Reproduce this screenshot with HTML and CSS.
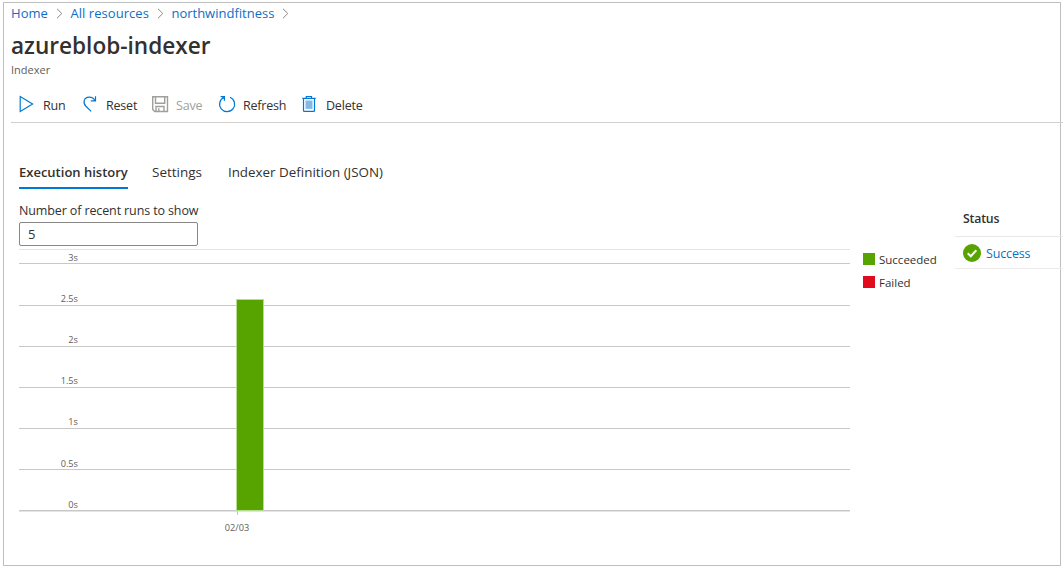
FILE: index.html
```html
<!DOCTYPE html>
<html lang="en">
<head>
<meta charset="utf-8">
<title>azureblob-indexer</title>
<link rel="stylesheet" href="styles.css">
</head>
<body>
<main class="frame">
  <nav class="crumbs">
    <a class="crumb home">Home</a>
    <svg class="chev" viewBox="0 0 7 11"><path d="M1 .8 5.8 5.5 1 10.2"/></svg>
    <a class="crumb all">All resources</a>
    <svg class="chev" viewBox="0 0 7 11"><path d="M1 .8 5.8 5.5 1 10.2"/></svg>
    <a class="crumb service">northwindfitness</a>
    <svg class="chev" viewBox="0 0 7 11"><path d="M1 .8 5.8 5.5 1 10.2"/></svg>
  </nav>
  <h1 class="title"><span>azureblob-indexer</span></h1>
  <p class="kind"><span>Indexer</span></p>

  <div class="toolbar">
    <button class="tool run"><svg class="icon" viewBox="0 0 18 18"><path d="M3.2 1.6v14.8L15.6 9z"/></svg><span>Run</span></button>
    <button class="tool reset"><svg class="icon" viewBox="0 0 18 18"><path d="M10.2 16.4 4.9 11.2C1.4 7.7 3 2.2 8.2 2.2c2.8 0 4.8 1.3 5.6 3.5M14.5 1.2v4.7H9.8"/></svg><span>Reset</span></button>
    <button class="tool save" disabled><svg class="icon" viewBox="0 0 18 18"><path d="M1.7 1.7h14.8v14.8H3.7l-2-2zM4.5 1.7v6.6h9.2V1.7M5 16.5v-5h8v5M7.8 16v-2.8"/></svg><span>Save</span></button>
    <button class="tool refresh"><svg class="icon" viewBox="0 0 18 18"><path d="M12 2.3a7.5 7.5 0 1 1-6 .1M2.6 1.7h3.8v4"/></svg><span>Refresh</span></button>
    <button class="tool delete"><svg class="icon" viewBox="0 0 18 18"><path class="bin" d="M5.5 5.5h7v8.4h-7z"/><path d="M2.3 3.4h13.4M6.3 3.2V1.5h5.2v1.7M3.5 3.4v12.1q0 .9.9.9h9.2q.9 0 .9-.9V3.4"/></svg><span>Delete</span></button>
  </div>

  <div class="content">
    <section class="history">
      <div class="tabs">
        <a class="tab active"><span>Execution history</span></a>
        <a class="tab settings"><span>Settings</span></a>
        <a class="tab definition"><span>Indexer Definition (JSON)</span></a>
      </div>
      <label class="label" for="runs"><span>Number of recent runs to show</span></label>
      <input class="runs" id="runs" value="5">
      <div class="chart-row">
        <svg class="chart" width="831" height="290" viewBox="0 0 831 290">
          <g shape-rendering="crispEdges">
            <path class="edge" d="M0 0h831v1H0zM0 262h831v1H0z"/>
            <path class="grid" d="M0 14h831v1H0zM0 56h831v1H0zM0 97h831v1H0zM0 138h831v1H0zM0 179h831v1H0zM0 220h831v1H0zM0 261h831v1H0zM218 262h1v4h-1z"/>
            <path class="halo" d="M217 50h28v212h-28z"/>
            <path class="bar" d="M218 51h26v210h-26z"/>
          </g>
          <g class="ticks" text-anchor="end">
            <text x="59" y="12">3s</text><text x="59" y="53">2.5s</text><text x="59" y="94">2s</text><text x="59" y="135">1.5s</text><text x="59" y="176">1s</text><text x="59" y="218">0.5s</text><text x="59" y="259">0s</text>
          </g>
          <text class="ticks" x="218" y="282" text-anchor="middle">02/03</text>
        </svg>
        <ul class="legend">
          <li><i class="swatch ok"></i><span>Succeeded</span></li>
          <li><i class="swatch bad"></i><span>Failed</span></li>
        </ul>
      </div>
    </section>
    <section class="status">
      <h2 class="status-head"><span>Status</span></h2>
      <div class="status-row">
        <svg class="badge" viewBox="0 0 18 18"><circle cx="9" cy="9" r="9"/><path d="M4.7 9.2 7.8 12.2 13.3 6.2"/></svg>
        <a class="crumb success">Success</a>
      </div>
    </section>
  </div>
</main>
</body>
</html>
```
FILE: styles.css
```css
* { box-sizing: border-box; margin: 0; padding: 0; }
body { width: 1063px; height: 567px; overflow: hidden; background: #fff; color: #323130; font: 13px/18px "Open Sans", "Noto Sans", sans-serif; white-space: nowrap; }
.frame { width: 1058px; height: 564px; margin: 2px 0 0 3px; border: 1px solid #bfbfbf; }
.crumbs { display: flex; align-items: center; height: 20px; padding-left: 7px; }
.crumb { color: #0b6fc8; }
.home, .all { letter-spacing: .05px; }
.chev { width: 7px; height: 11px; margin: 0 7.5px 0 8px; fill: none; stroke: #8a8886; stroke-width: 1; }
.title { height: 38px; padding: 5px 0 0 7px; font-size: 22.6px; line-height: 36px; font-weight: 600; }
.kind { height: 18px; padding-left: 7px; font-size: 11px; color: #605e5c; }
.toolbar { display: flex; align-items: center; width: 1053px; height: 44px; margin-left: 7px; padding: 7px 0 0 6px; border-bottom: 1px solid #d2d0ce; font-size: 12.5px; letter-spacing: -.2px; }
.tool { display: flex; align-items: center; gap: 7px; border: 0; background: none; font: inherit; letter-spacing: inherit; color: inherit; }
.tool span { padding-top: 3px; }
.tool:disabled { color: #a19f9d; }
.icon { width: 18px; height: 18px; fill: none; stroke: #0078d4; stroke-width: 1.2; }
.save .icon { stroke: #a19f9d; stroke-width: 1.4; }
.icon .bin { fill: #83b9e8; stroke: none; }
.run { width: 64px; gap: 8px; }
.reset { width: 70px; }
.save { width: 67px; }
.refresh { width: 82px; }
.delete { gap: 8px; }
.content { display: flex; height: 440px; }
.history { width: 951px; flex: none; padding-left: 15px; }
.tabs { display: flex; gap: 24px; height: 66px; padding-top: 33px; }
.tab { height: 33px; padding-top: 7px; }
.settings { font-size: 13.5px; letter-spacing: -.02px; }
.definition { font-size: 13.4px; margin-left: 2px; }
.active { width: 109px; font-weight: 600; border-bottom: 2px solid #0078d4; }
.label { display: block; height: 33px; padding-top: 13px; font-size: 12.5px; letter-spacing: -.12px; }
.runs { display: block; width: 179px; height: 24px; padding: 0 8px; border: 1px solid #8a8886; border-radius: 2px; color: inherit; font: inherit; }
.chart-row { display: flex; gap: 13px; margin-top: 3px; }
.edge { fill: #e3e3e3; }
.grid { fill: #c8c8c8; }
.halo { fill: #b9dc94; }
.bar { fill: #57a300; }
.ticks { fill: #605e5c; font-size: 9.2px; }
.legend { list-style: none; font-size: 11.5px; margin-top: -2px; }
.legend li { display: flex; align-items: center; gap: 4px; height: 23px; padding-top: 1px; }
.swatch { width: 12px; height: 12px; }
.legend span { padding-top: 1px; }
.ok { background: #57a300; }
.bad { background: #e00b1c; }
.status { width: 108px; flex: none; padding-top: 77px; }
.status-head { height: 37px; padding: 10px 0 0 8px; border-bottom: 1px solid #e8e8e8; font-size: 12.3px; line-height: 18px; font-weight: 600; letter-spacing: -.2px; }
.status-row { display: flex; align-items: center; gap: 5px; height: 32px; padding-left: 8px; border-bottom: 1px solid #edebe9; }
.success { padding-top: 2px; font-size: 12.5px; letter-spacing: -.15px; }
.badge { width: 18px; height: 18px; fill: #57a300; }
.badge path { fill: none; stroke: #fff; stroke-width: 2; }
```
